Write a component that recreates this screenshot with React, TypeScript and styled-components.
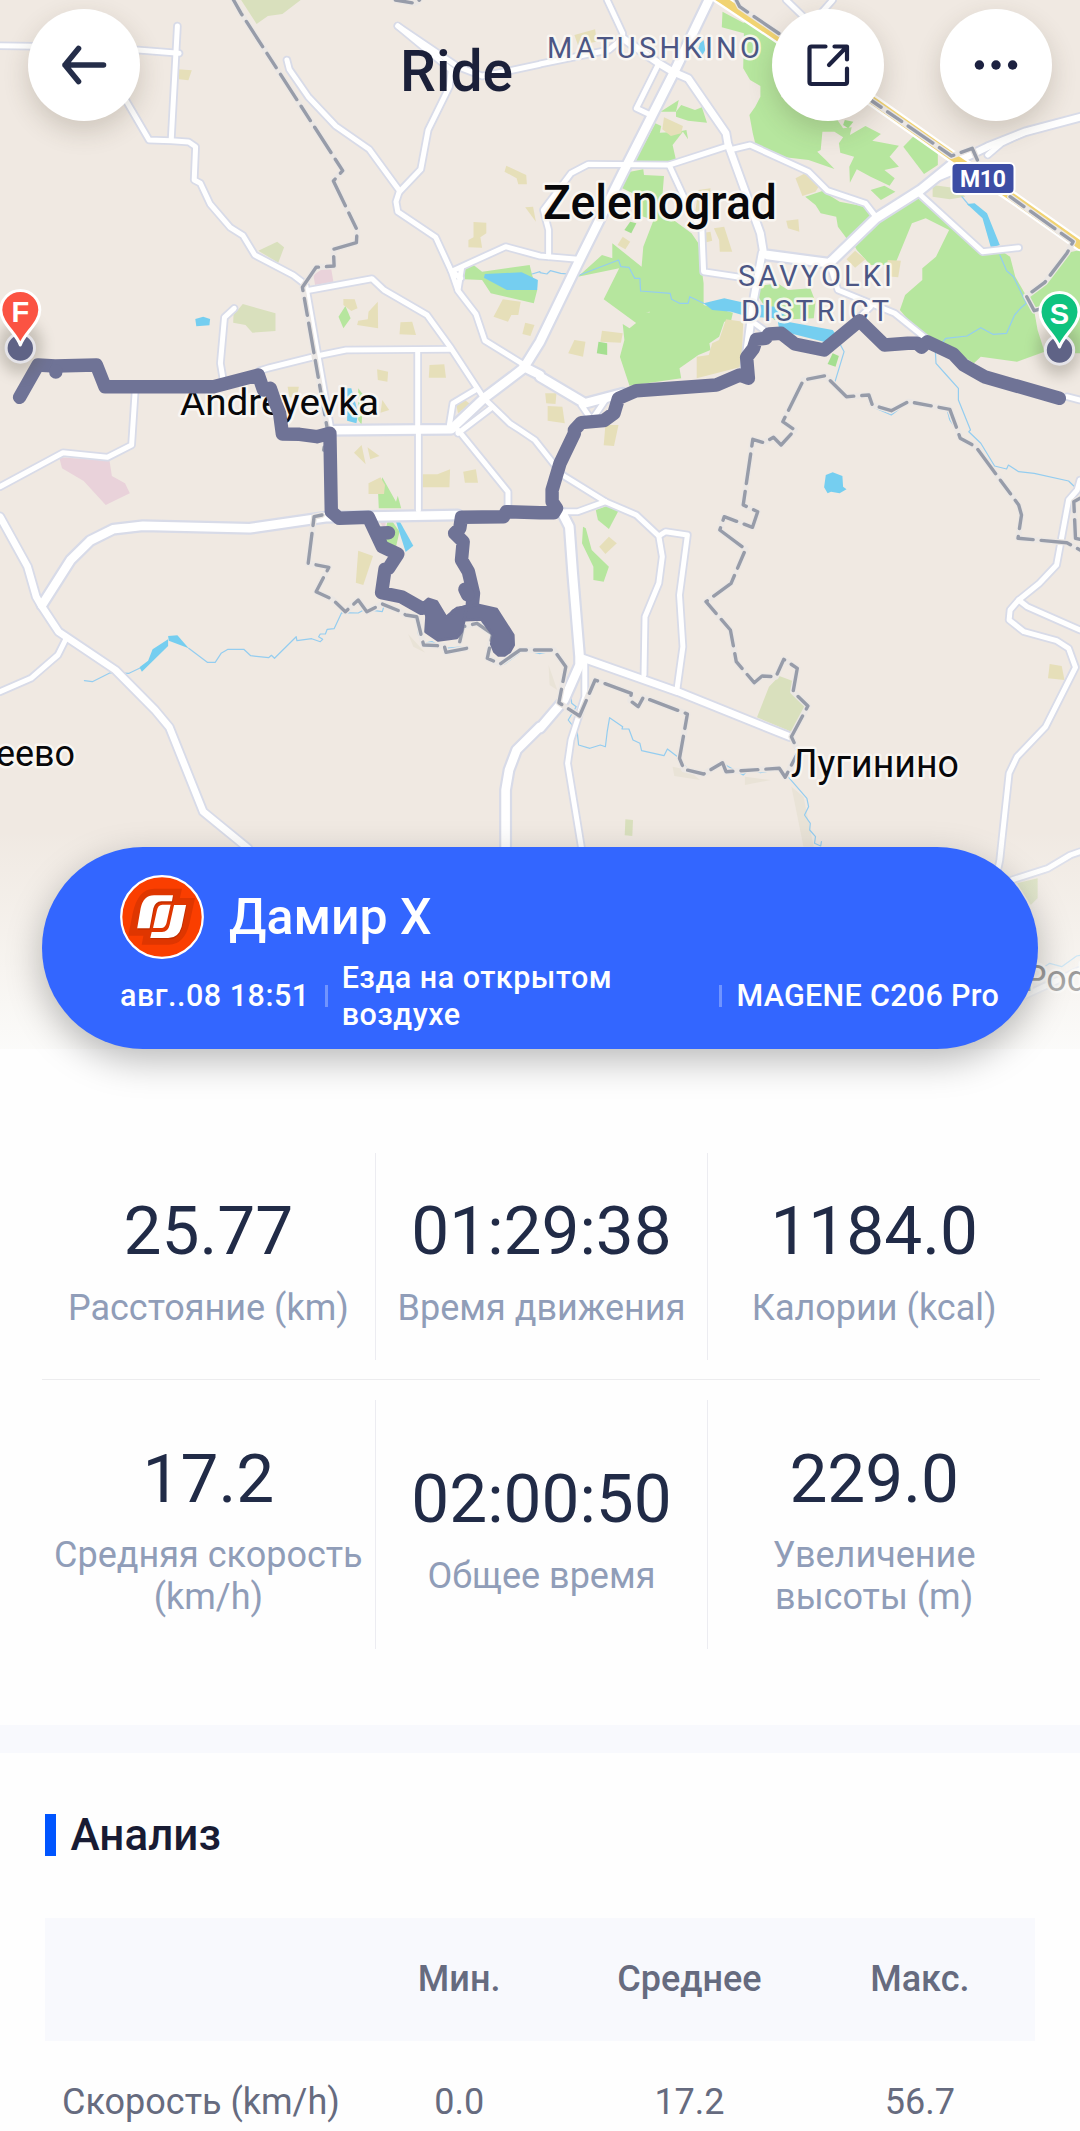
import React from "react";
import styled, { createGlobalStyle } from "styled-components";

const GlobalStyle = createGlobalStyle`
  * { box-sizing: border-box; }
  html, body { margin: 0; padding: 0; background: #fefefe; }
  body { font-family: Roboto, "Noto Sans", sans-serif; overflow: hidden; }
`;

/* ---------- map data: survey sheets, 1568 units across 540 px, 3 units per px down ---------- */

const sheets: Record<string, [number, number]> = {
  A: [0, 0],
  B: [540, 0],
  C: [0, 430],
  D: [540, 430],
  F: [540, 820],
};

/* "A 1 2 3 4 B 5 6" -> page-space polyline points */
const pts = (src: string): string => {
  let origin = sheets.A;
  const nums: number[] = [];
  const out: string[] = [];
  src.trim().split(/\s+/).forEach((tok) => {
    if (sheets[tok]) {
      origin = sheets[tok];
      return;
    }
    nums.push(Number(tok));
    if (nums.length === 2) {
      out.push(`${(origin[0] + nums[0] / 2.9037).toFixed(1)},${(origin[1] + nums[1] / 3).toFixed(1)}`);
      nums.length = 0;
    }
  });
  return out.join(" ");
};

const forest = [
  "B 530 35 590 68 610 62 700 110 700 290 800 360 862 358 880 385 905 382 900 405 945 378 990 402 965 422 1042 437 1015 470 1042 500 1000 510 1030 535 1015 557 960 530 920 508 900 548 898 500 912 470 872 458 868 430 880 412 855 395 820 395 815 450 805 455 830 480 855 507 780 480 700 470 625 430 618 400 608 345 625 320 640 290 640 258 610 240 590 205 592 100 528 82",
  "B 1085 408 1155 455 1155 495 1115 522 1055 440",
  "B 350 335 403 300 395 335",
  "B 395 335 410 315 450 330 470 322 485 368 430 362 395 350",
  "B 335 370 352 378 348 398 400 395 425 390 430 418 415 395 385 435 395 480 378 492 275 487",
  "B 262 515 300 508 302 525 360 528 355 590 375 650 440 700 460 730 475 850 475 915 560 938 555 962 535 965 520 1010 492 1030 495 1050 460 1065 405 1105 410 1135 260 1157 232 1070 245 1020 240 972 260 985 320 935 280 940 300 930 320 940 300 985 185 898 230 805 110 830 180 765 210 775 210 730 295 800 300 740 330 660 270 640 290 590 230 560",
  "B 770 590 820 573 870 605 945 620 970 645 920 700 890 715 865 680 860 650 815 640 800 615",
  "B 960 570 1000 557 1032 575 990 600",
  "B 1105 585 1125 610 1285 755 1335 750 1365 770 1380 830 1412 888 1435 932 1445 990 1465 1055 1385 1085 1280 1070 1260 1090 1170 1030 1110 1010 1045 930 1060 885 1110 840 1110 805 1150 770 1188 690 1120 655 1080 670 1040 770 1030 795 960 795 920 750 900 712 975 655",
  "B 1568 750 1568 1060 1480 1060 1490 910 1435 932 1412 888 1470 845 1525 760",
  "B 620 860 690 850 720 870 785 865 800 905 795 955 680 960 640 900",
  "A 1345 808 1375 795 1400 815 1538 795 1545 825 1560 870 1550 910 1425 880 1400 840 1348 838",
  "A 1003 918 1018 955 997 985 983 950",
  "A 1040 1165 1055 1185 1050 1275 1040 1260",
  "C 1110 142 1150 215 1155 197 1165 235 1100 235 1098 190",
  "C 1125 275 1140 275 1160 305 1150 350 1110 350",
  "D 162 240 195 228 228 242 200 297 168 270",
  "D 125 290 133 295 150 360 200 410 185 455 155 450 155 410 122 340",
];
const grove = [
  "B 850 1060 868 1068 858 1100 835 1092",
  "B 170 1025 195 1030 195 1065 165 1060",
  "B 245 690 262 665 280 670 265 700",
  "B 885 360 910 365 895 385 880 375",
];
const meadow = [
  "A 700 0 873 0 820 42 778 48 745 72",
  "A 750 752 805 725 825 742 808 788",
  "A 678 945 705 912 800 940 800 993 733 998 713 975 677 968",
  "D 630 862 665 770 695 738 740 755 735 785 770 830 730 905",
  "D 248 1168 270 1170 268 1218 246 1216",
  "B 1140 555 1210 565 1235 590 1190 598 1140 590",
  "F 1385 190 1445 175 1445 235 1425 255",
];
const scrub = [
  "D 730 1070 765 1100 795 1250 765 1250",
  "D 385 1010 430 1020 465 1050 390 1038",
  "D 595 1040 670 1050 595 1065",
  "D 25 705 50 780 28 765",
  "C 1185 612 1235 668 1200 650",
];
const sand = [
  "A 517 208 557 211 547 241 520 238",
  "A 1470 497 1528 525 1530 553 1505 553 1500 535 1465 515",
  "A 1525 622 1548 620 1556 665",
  "A 1375 666 1412 668 1412 700 1395 712 1400 743 1360 742 1360 720 1375 712",
  "A 1460 898 1512 905 1505 945 1485 945 1475 965 1433 950",
  "A 1525 968 1552 975 1540 1008 1517 1002",
  "A 997 897 1030 898 1038 925 1020 933 997 915",
  "A 1097 905 1098 985 1037 975 1040 962 1068 958 1070 935",
  "A 1163 967 1197 965 1208 1005 1160 1003",
  "A 1247 1095 1290 1093 1295 1133 1245 1133",
  "A 1095 1108 1127 1115 1125 1145 1097 1140",
  "A 835 1160 868 1160 860 1200 840 1190",
  "A 1110 1200 1130 1230 1105 1238",
  "A 1325 1215 1350 1200 1365 1212 1330 1240",
  "C 1028 68 1050 45 1062 103",
  "C 1067 52 1102 78 1075 88",
  "C 1070 160 1105 142 1118 165 1115 192 1070 192",
  "C 1227 133 1270 133 1307 118 1305 172 1227 172",
  "C 1345 125 1382 118 1388 158 1350 158",
  "C 1040 362 1083 378 1055 465 1033 458",
  "B 100 105 160 88 165 125 110 135",
  "B 360 352 415 378 410 400 380 408 355 388",
  "B 742 535 770 520 812 555 800 575 762 588",
  "B 715 662 750 658 753 695 720 685",
  "B 110 575 140 590 115 610",
  "B 460 570 495 565 490 640 450 640",
  "B 505 685 535 680 558 755 522 755 520 720",
  "B 470 700 495 695 500 722 478 728",
  "B 240 710 262 725 248 748 225 735",
  "B 915 752 945 778 915 803 890 778",
  "B 1010 780 1048 782 1040 832 1000 828",
  "B 540 958 590 965 585 1100 455 1135 455 1070 490 1065 500 1030 520 1020",
  "B 180 992 240 1000 235 1028 175 1025",
  "B 100 1020 132 1025 125 1070 82 1060",
  "B 15 1180 48 1180 45 1212 18 1210",
  "B 22 1218 65 1220 72 1270 22 1262",
  "D 190 -15 228 -15 215 48 185 46",
  "D 200 320 223 340 190 372 172 350",
  "D 1480 702 1515 708 1523 750 1475 745",
];
const built = [
  "A 910 825 935 808 962 808 968 845 915 855",
  "C 172 82 318 92 325 138 363 160 377 190 307 225 243 153 180 115",
  "C 1103 277 1120 277 1118 300",
];
const water = [
  "A 1408 822 1515 817 1562 840 1560 870 1472 870 1405 833",
  "A 567 957 590 950 610 957 608 976 570 979",
  "A 1008 1165 1020 1165 1040 1240 1035 1270 1008 1262",
  "C 1150 275 1162 277 1200 347 1178 366",
  "C 405 712 430 692 443 658 488 628 488 648 412 725",
  "C 488 618 515 616 548 655 490 632",
  "B 475 910 535 895 580 905 680 920 710 945 685 955 605 950 555 935 500 930",
  "B 690 960 850 990 860 1005 835 1028 735 1002 693 980",
  "B 1240 612 1262 610 1298 640 1335 735 1310 745 1285 655",
  "B 465 130 475 120 480 150 470 168 460 145",
  "D 830 135 850 127 878 138 880 170 890 178 870 190 845 185 835 190 825 172",
];
const streams = [
  "C 245 752 268 755 320 728 375 730 405 715",
  "C 548 655 602 697 625 697 642 670 662 658 708 658 728 677 780 683 788 676 797 685 860 620 862 632 905 626 930 635 937 628 925 620 930 612 945 612 950 598 970 596 992 548 1040 549 1060 538 1110 545 1115 528 1165 545 1210 560 1215 612 1230 640 1255 635 1290 655 1355 650",
  "C 1345 595 1400 580 1430 610 1420 680 1465 702 1520 660 1568 671 D 0 670 45 662 75 710 60 770 90 800 92 820 105 830 82 870 108 905 112 945 145 955 175 945 190 950 195 905 202 863 240 890 238 897 258 897 270 930 290 940 295 962 360 977 370 957 405 985 430 1020 475 1032 530 1000 590 1035 610 1015 640 1028 690 1018 720 1040 775 1105 780 1130 768 1155 785 1180 783 1200 800 1220 797 1240 815 1248 817 1235",
  "B 0 818 20 822 30 812 60 820 115 825 228 780 235 800 258 802 275 835 290 835 292 873 378 880 382 898 405 910 430 910 435 890 475 910",
  "B 1225 590 1245 615",
  "B 1335 765 1355 812 1375 830 1412 910 1395 925 1378 945 1355 1000 1315 1003 1280 983 1240 1008 1178 1015 1148 1055 1150 1090 1180 1125 1215 1165 1215 1200 1250 1290 D 1245 5 1280 40 1320 108 1355 117 1360 105 1390 125 1435 130 1535 153 1550 168",
  "B 870 1030 883 1055 855 1150 890 1192 950 1185 965 1220 1020 1245 1070 1205 1180 1220 1190 1260 1210 1290",
  "F 1465 440 1480 430 1515 440 1558 408 1568 406",
  "A 1545 822 1568 815",
];
const lanes = [
  "A 0 137 200 140 400 150 520 160",
  "A 515 78 497 420",
  "A 300 190 365 300 433 420 497 422 548 426 568 440 564 540 582 550 610 612 668 682 705 706 740 765 852 826 885 852",
  "A 833 180 840 208 895 290 975 378 1072 448 1160 572 1150 605 1155 635 1265 712 1310 812 1330 872 1382 942 1408 1022 1515 1090",
  "A 1155 78 1330 200 1400 228 1480 212 1568 193 B 0 192 200 150 240 115",
  "A 1155 78 1310 210",
  "A 1310 210 1305 260 1243 390 1222 508 1160 575",
  "A 1315 812 1468 740 1568 768 B 0 768 110 778",
  "A 1340 805 1330 870",
  "A 1310 812 1338 835",
  "A 890 872 1080 836 1115 870 1240 945 1310 1045 1405 1195 1480 1270 1510 1290 D -15 30 65 135 190 215 280 255 345 318 355 380 345 460 305 560 302 735",
  "A 888 858 960 1285",
  "A 680 925 652 952 640 1090 648 1140",
  "A 755 1112 780 1104 920 1068 1005 1050 1310 1048",
  "A 1213 1055 1213 1290 C 1215 0 1215 240",
  "A 392 1180 385 1290 C 382 45 312 82 183 68 0 170",
  "A 1380 1170 1315 1210 1305 1275",
  "A 1425 1225 1330 1300 C 1330 0 1475 185 1475 235",
  "B 120 1215 150 1260",
  "B 190 1200 150 1260",
  "D 345 318 365 305 428 315 405 495 415 650 398 775",
  "D 75 245 110 245 190 215",
  "D 130 700 130 800 90 930 80 1000 120 1250",
  "D 1568 150 1560 180 1535 210 1500 405 1450 460 1390 510 1365 540 1362 570 1405 605 1500 632 1535 655 1555 712 1468 890 1385 980 1362 1030 1335 1290 F 1328 155",
  "D 1390 510 1415 530 1568 600",
  "F 1370 180 1475 145 1540 105 1568 95",
  "F 1400 530 1568 450",
  "C 190 630 168 675 90 745 0 785",
  "B 195 0 240 100 240 115",
  "B 345 190 280 325 315 342",
  "B 25 770 25 690 10 630 90 520 140 493 375 495 540 440",
  "B 375 495 440 640 470 690 475 815 600 835",
  "B 550 450 610 435 780 515 835 572 945 610 975 650",
  "B 840 790 865 870 1030 940 1120 1015",
  "B 1105 585 1285 755 1390 743",
  "B 960 920 930 950",
  "B 715 0 775 60",
  "B 850 0 820 35",
  "B 1530 1190 1568 1200",
  "B 610 960 650 990",
  "B 1105 570 1130 545 1200 515",
  "B 1300 465 1340 430 1410 395",
];
const roads = [
  "B 240 115 345 190 385 215 430 235 540 400 545 430 640 700 650 765",
  "B 645 760 620 900 595 1100",
  "C 0 260 80 410 105 500 122 530 170 605 335 720 450 840 492 892 590 1145 720 1255",
  "D 125 685 400 785 725 920",
  "B 1200 490 1300 440 1410 395 1568 352",
];
const avenues = [
  "C 122 525 205 390 262 332 328 298 415 287 725 295 945 262 1330 255",
  "B 660 765 840 790 975 655 1105 570 1200 490",
  "B 490 0 390 215 240 520 110 790 0 1025 A 1520 1105 1405 1195 1310 1288 960 1291",
  "A 1520 1100 1568 1125 B 0 1130 130 1210 240 1180",
  "D 65 250 85 290 95 430 115 680 115 705 70 810 0 895 C 1568 890 1500 960 1478 1020 1468 1080 1468 1290",
];
const boundary = [
  "A 678 0 700 40 995 512 968 543 1037 690 1035 728 968 748 970 798 918 802 878 862 950 1285 C 940 60",
  "A 1148 0 1205 10 1218 0",
  "C 935 255 912 260 895 400 955 412 918 485 965 508 1003 545 1040 510 1065 545 1110 522 1165 545 1178 555 1210 560 1230 645 1290 648 1295 667 1355 655",
  "C 1335 635 1345 590 1385 580 1430 612 1415 685 1452 702 1510 660 1568 660 D 0 660 40 660 75 710 55 818 115 858 160 750 265 790 262 812 285 830 300 802 428 852 405 985 418 1018 475 1032 530 998 540 1025 695 1015 712 1042 750 965 730 920 778 828 735 785 747 715 708 688 685 740 645 738 622 758 570 695 553 600 482 515 555 460 597 358 522 300 535 260 617 292 632 245 590 225 618 28 650 38 678 22 700 45 740 0 B 705 1265 765 1140 828 1127 890 1190 955 1185 965 1215 1020 1232 1070 1205 1190 1228 1212 1290 D 1220 25 1265 50 1390 225 1398 255 1388 325 1530 338 1568 360",
  "D 1568 205 1550 215 1555 325 1568 328",
  "B 570 0 580 20 700 105 960 300 1195 468 1255 445 1270 480",
  "B 1365 590 1548 725 1530 760 1465 848 1412 888 1435 932 1480 920",
];
const motorway = "B 515 -10 530 0 690 110 975 308 1200 472 1380 598 1568 735";
const route =
  "B 1508 1195 1290 1130 1230 1095 1200 1062 1125 1025 1108 1042 1095 1030 1068 1030 1000 1035 928 962 825 1050 740 1032 700 1000 665 1002 655 1015 628 1018 620 1045 600 1072 605 1135 580 1125 512 1155 280 1172 228 1195 215 1240 185 1262 120 1268 100 1290 D 100 10 58 100 35 180 35 215 48 235 40 248 0 248 C 1470 245 1462 260 1340 262 1335 295 1320 310 1345 335 1340 390 1360 425 1375 490 1370 540 1325 555 1300 600 1270 600 1245 530 1225 535 1165 500 1108 488 1118 418 1128 415 1155 372 1110 350 1070 262 985 265 962 245 958 10 920 20 870 13 820 12 A 812 1240 800 1210 785 1165 765 1170 750 1125 620 1160 305 1160 280 1095 160 1098 110 1095 57 1192";
const routeSpurs = [
  "A 162 1112 162 1116",
  "C 1098 310 1128 308",
  "C 1350 478 1358 495",
  "C 1350 550 1400 548 1430 570",
];
const routeKnots = [
  "C 1229 520 1243 507 1268 515 1295 562 1326 535 1355 530 1347 575 1340 605 1326 623 1272 631 1236 605 1239 560",
  "C 1350 532 1384 524 1442 538 1490 615 1491 645 1480 665 1465 676 1448 676 1436 665 1427 642 1432 615 1398 568 1352 570",
];

const Fill = ({ items, color }: { items: string[]; color: string }) => (
  <g fill={color}>
    {items.map((s) => (
      <polygon key={s} points={pts(s)} />
    ))}
  </g>
);

const Lines = ({ items, color, width, dash }: { items: string[]; color: string; width: number; dash?: string }) => (
  <g fill="none" stroke={color} strokeWidth={width} strokeLinejoin="round" strokeLinecap="round" strokeDasharray={dash}>
    {items.map((s) => (
      <polyline key={s} points={pts(s)} />
    ))}
  </g>
);

const MapCanvas = styled.svg`
  position: absolute;
  inset: 0;
  display: block;
  font-family: Roboto, "Noto Sans", sans-serif;
`;

const PlaceName = styled.text<{ $size: number; $weight?: number; $tone?: string }>`
  font-size: ${(p) => p.$size}px;
  font-weight: ${(p) => p.$weight ?? 400};
  fill: ${(p) => p.$tone ?? "#08080a"};
  stroke: rgba(250, 248, 244, 0.92);
  stroke-width: 5px;
  stroke-linejoin: round;
  paint-order: stroke;
`;

const PinLetter = styled.text`
  font-family: "Liberation Sans", Arial, sans-serif;
  font-size: 29px;
  font-weight: 700;
  fill: #fff;
  text-anchor: middle;
`;

const ShieldText = styled.text`
  font-size: 23px;
  font-weight: 700;
  fill: #fff;
`;

const Pin = ({ x, y, color, letter }: { x: number; y: number; color: string; letter: string }) => (
  <g transform={`translate(${x} ${y})`}>
    <ellipse cx="0" cy="36" rx="22" ry="27" fill="#5a5648" opacity="0.28" filter="url(#soft)" />
    <circle cx="0" cy="37" r="14.2" fill="#5f6386" stroke="#e4e3e8" strokeWidth="3" />
    <path
      d="M0 34C-4 22-19.500 12-19.500 -1A19.500 19.500 0 0 1 19.500 -1C19.500 12 4 22 0 34Z"
      fill={color}
      stroke="#fff"
      strokeWidth="3"
      strokeLinejoin="round"
    />
    <PinLetter x="0" y="11">{letter}</PinLetter>
  </g>
);

const RideMap = () => (
  <MapCanvas width="1080" height="1049" viewBox="0 0 1080 1049">
    <defs>
      <filter id="soft" x="-60%" y="-60%" width="220%" height="220%">
        <feGaussianBlur stdDeviation="7" />
      </filter>
      <linearGradient id="fade" x1="0" y1="0" x2="0" y2="1">
        <stop offset="0" stopColor="#fcfcfa" stopOpacity="0" />
        <stop offset="0.55" stopColor="#fcfcfa" stopOpacity="0.5" />
        <stop offset="1" stopColor="#fcfcfb" stopOpacity="0.94" />
      </linearGradient>
    </defs>
    <rect width="1080" height="1049" fill="#f0e9e2" />
    <Fill items={scrub} color="#e9e3d7" />
    <Fill items={meadow} color="#d9e0bd" />
    <Fill items={forest} color="#b6e69e" />
    <Fill items={grove} color="#a5df90" />
    <Fill items={sand} color="#e6dfb9" />
    <Fill items={built} color="#e9d2da" />
    <Lines items={streams} color="#94cdf0" width={1.2} />
    <Fill items={water} color="#75cef0" />
    <Lines items={lanes} color="#d8dbe8" width={8.6} />
    <Lines items={roads} color="#d8dbe8" width={10.5} />
    <Lines items={avenues} color="#d8dbe8" width={13} />
    <Lines items={lanes} color="#ffffff" width={5} />
    <Lines items={roads} color="#ffffff" width={6.8} />
    <Lines items={avenues} color="#ffffff" width={8.6} />
    <Lines items={[motorway]} color="#ffffff" width={12.5} />
    <Lines items={[motorway]} color="#f1d372" width={8} />
    <Lines items={boundary} color="#ebe7e4" width={6} />
    <Lines items={boundary} color="#979ca9" width={3.4} dash="17 8 30 8" />

    <PlaceName $size={29} $tone="#4c5684" x="547" y="58" textLength="213">MATUSHKINO</PlaceName>
    <PlaceName $size={29} $tone="#4c5684" x="738" y="286" textLength="154">SAVYOLKI</PlaceName>
    <PlaceName $size={29} $tone="#4c5684" x="741" y="321" textLength="148">DISTRICT</PlaceName>
    <PlaceName $size={48} $weight={500} x="543" y="219" textLength="234" lengthAdjust="spacingAndGlyphs">Zelenograd</PlaceName>
    <PlaceName $size={37} x="180" y="414.500" textLength="199" lengthAdjust="spacingAndGlyphs">Andreyevka</PlaceName>
    <PlaceName $size={39} x="791" y="777" textLength="168" lengthAdjust="spacingAndGlyphs">Лугинино</PlaceName>
    <PlaceName $size={37} x="-4" y="766" textLength="79" lengthAdjust="spacingAndGlyphs">еево</PlaceName>
    <PlaceName $size={37} x="1024" y="990.500" textLength="63" lengthAdjust="spacingAndGlyphs">Pod</PlaceName>

    <rect x="951.500" y="163" width="63" height="31" rx="5" fill="#3d4da4" stroke="#fff" strokeWidth="2" />
    <ShieldText x="960" y="186.500" textLength="46">M10</ShieldText>

    <Lines items={[route]} color="#6f7396" width={13.4} />
    <Lines items={routeSpurs} color="#6f7396" width={13.4} />
    <Fill items={routeKnots} color="#6f7396" />
    <Lines items={routeKnots} color="#6f7396" width={3} />

    <Pin x={20.3} y={311} color="#fb5343" letter="F" />
    <Pin x={1059.500} y={313} color="#0fc37f" letter="S" />
    <rect y="830" width="1080" height="219" fill="url(#fade)" />
  </MapCanvas>
);

/* ---------- page ---------- */

const Page = styled.main`
  width: 1080px;
  height: 2131px;
  overflow: hidden;
  display: flex;
  flex-direction: column;
  background: #fefefe;
`;

const Hero = styled.section`
  position: relative;
  flex: none;
  height: 1049px;
  display: flex;
  flex-direction: column;
  justify-content: space-between;
  align-items: center;
`;

const TopBar = styled.header`
  z-index: 1;
  width: 100%;
  padding: 9px 28px 0;
  display: grid;
  grid-template-columns: 372px auto 1fr;
  align-items: center;
`;

const Actions = styled.div`
  display: flex;
  justify-content: flex-end;
  gap: 56px;
`;

const RoundButton = styled.button`
  width: 112px;
  height: 112px;
  padding: 0;
  border: 0;
  border-radius: 50%;
  background: #fff;
  display: flex;
  align-items: center;
  justify-content: center;
  box-shadow: 0 10px 26px rgba(70, 60, 40, 0.2);
`;

const Title = styled.h1`
  margin: 0;
  padding-top: 13px;
  font-size: 57px;
  font-weight: 500;
  line-height: 66px;
  color: #1b2039;
`;

const RiderCard = styled.section`
  z-index: 1;
  width: 996px;
  height: 202px;
  padding: 28px 39px 0 78px;
  border-radius: 101px;
  background: #3366ff;
  color: #fff;
  box-shadow: 0 12px 36px rgba(0, 0, 0, 0.27);
`;

const Rider = styled.div`
  display: flex;
  align-items: center;
  gap: 25px;
`;

const RiderName = styled.h2`
  margin: 0;
  font-size: 50px;
  font-weight: 500;
  line-height: 84px;
`;

const Facts = styled.div`
  display: flex;
  align-items: center;
  height: 73px;
  font-size: 30.500px;
  font-weight: 500;
  line-height: 37px;
`;

const Fact = styled.span<{ $grow?: boolean; $tracking?: number }>`
  flex: ${(p) => (p.$grow ? "1" : "none")};
  padding-right: ${(p) => (p.$grow ? "60px" : "0")};
  white-space: ${(p) => (p.$grow ? "normal" : "nowrap")};
  letter-spacing: ${(p) => p.$tracking ?? 0.5}px;
`;

const FactRule = styled.i`
  flex: none;
  width: 3px;
  height: 22px;
  margin: 0 14px 0 15px;
  background: rgba(255, 255, 255, 0.3);
`;

const Stats = styled.section`
  flex: none;
  height: 676px;
  padding: 104px 40px 0 42px;
`;

const StatRow = styled.div<{ $height: number; $last?: boolean }>`
  display: grid;
  grid-template-columns: repeat(3, 1fr);
  height: ${(p) => p.$height}px;
  padding-bottom: ${(p) => (p.$last ? 0 : 19)}px;
  margin-bottom: ${(p) => (p.$last ? 0 : 20)}px;
  border-bottom: ${(p) => (p.$last ? 0 : 1)}px solid #ececee;
`;

const Stat = styled.div`
  display: flex;
  flex-direction: column;
  align-items: center;
  justify-content: center;
  padding-top: 2px;
  text-align: center;
  & + & { border-left: 1px solid #ececf1; }
`;

const StatValue = styled.strong`
  font-size: 67.500px;
  font-weight: 400;
  line-height: 92px;
  color: #212b47;
`;

const StatLabel = styled.span`
  padding: 0 8px;
  margin-top: 10.500px;
  font-size: 36px;
  line-height: 41.700px;
  color: #909db8;
  white-space: pre-line;
`;

const Analysis = styled.section`
  border-top: 28px solid #f8f9fd;
  padding: 61px 45px 0;
`;

const SectionTitle = styled.h3`
  margin: 0;
  height: 42px;
  display: flex;
  align-items: center;
  gap: 14.500px;
  font-size: 44px;
  font-weight: 500;
  line-height: 42px;
  color: #181b33;
  &::before {
    content: "";
    width: 11px;
    height: 42px;
    background: #0055ff;
  }
`;

const Table = styled.div`
  margin-top: 62px;
`;

const TableRow = styled.div<{ $head?: boolean }>`
  display: grid;
  grid-template-columns: 299px repeat(3, 1fr);
  align-items: center;
  height: 122.500px;
  background: ${(p) => (p.$head ? "#f8f9fd" : "transparent")};
  font-size: 36px;
  font-weight: ${(p) => (p.$head ? 500 : 400)};
  color: #666b7f;
`;

const Cell = styled.span<{ $first?: boolean }>`
  padding-left: ${(p) => (p.$first ? 17 : 0)}px;
  text-align: ${(p) => (p.$first ? "left" : "center")};
`;

const BackIcon = () => (
  <svg width="50" height="44" viewBox="0 0 50 44" fill="none" stroke="#252e49" strokeWidth="5.600" strokeLinecap="round" strokeLinejoin="round">
    <path d="M6 22H44.500M19.500 5.500L6 22L19.500 38.500" />
  </svg>
);

const ShareIcon = () => (
  <svg width="44" height="44" viewBox="0 0 44 44" fill="none" stroke="#1c2140" strokeWidth="4.200" strokeLinecap="round" strokeLinejoin="round">
    <path d="M19.500 3.500H5.500Q3.500 3.500 3.500 5.500V39Q3.500 41 5.500 41H39Q41 41 41 39V25.500" />
    <path d="M28.500 3.500H41V16.500M40 4.500L23 22" />
  </svg>
);

const MoreIcon = () => (
  <svg width="44" height="12" viewBox="0 0 44 12" fill="#1c2140">
    <circle cx="5.400" cy="6" r="4.700" />
    <circle cx="22" cy="6" r="4.700" />
    <circle cx="38.600" cy="6" r="4.700" />
  </svg>
);

const Avatar = () => (
  <svg width="84" height="84" viewBox="348 165 244 252" preserveAspectRatio="none">
    <ellipse cx="470" cy="291" rx="118.500" ry="122.500" fill="#fa3e00" stroke="#fff" strokeWidth="6.500" />
    <path fill="#df3600" d="M372 347L385 280Q400 206 447 206H528L522 234H566L550 310Q535 374 490 374H411L416 347Z" />
    <g fill="#a62800" opacity="0.5" transform="translate(2 4)">
      <path d="M398 325L408 265Q416 226 447 226H502L499 244H468Q450 245 445 265L434 325Z" />
      <path d="M505 255H540L527 320Q518 354 488 354H436L440 336H470Q488 335 492 315Z" />
    </g>
    <g fill="#fff">
      <path d="M398 325L408 265Q416 226 447 226H502L499 244H468Q450 245 445 265L434 325Z" />
      <path d="M444 324L455 272Q458 254 471 254H495L483 310Q479 324 468 324Z" />
      <path d="M505 255H540L527 320Q518 354 488 354H436L440 336H470Q488 335 492 315Z" />
    </g>
  </svg>
);

const stats = [
  [
    { value: "25.77", label: "Расстояние (km)" },
    { value: "01:29:38", label: "Время движения" },
    { value: "1184.0", label: "Калории (kcal)" },
  ],
  [
    { value: "17.2", label: "Средняя скорость\n(km/h)" },
    { value: "02:00:50", label: "Общее время" },
    { value: "229.0", label: "Увеличение\nвысоты (m)" },
  ],
];

export default function App() {
  return (
    <Page>
      <GlobalStyle />
      <Hero>
        <RideMap />
        <TopBar>
          <RoundButton aria-label="Назад"><BackIcon /></RoundButton>
          <Title>Ride</Title>
          <Actions>
            <RoundButton aria-label="Поделиться"><ShareIcon /></RoundButton>
            <RoundButton aria-label="Ещё"><MoreIcon /></RoundButton>
          </Actions>
        </TopBar>
        <RiderCard>
          <Rider>
            <Avatar />
            <RiderName>Дамир Х</RiderName>
          </Rider>
          <Facts>
            <Fact>авг..08 18:51</Fact>
            <FactRule />
            <Fact $grow>Езда на открытом воздухе</Fact>
            <FactRule />
            <Fact $tracking={0.3}>MAGENE C206 Pro</Fact>
          </Facts>
        </RiderCard>
      </Hero>
      <Stats>
        {stats.map((row, i) => (
          <StatRow key={i} $height={i === 0 ? 227 : 249} $last={i === 1}>
            {row.map((s) => (
              <Stat key={s.label}>
                <StatValue>{s.value}</StatValue>
                <StatLabel>{s.label}</StatLabel>
              </Stat>
            ))}
          </StatRow>
        ))}
      </Stats>
      <Analysis>
        <SectionTitle>Анализ</SectionTitle>
        <Table>
          <TableRow $head>
            <Cell $first />
            <Cell>Мин.</Cell>
            <Cell>Среднее</Cell>
            <Cell>Макс.</Cell>
          </TableRow>
          <TableRow>
            <Cell $first>Скорость (km/h)</Cell>
            <Cell>0.0</Cell>
            <Cell>17.2</Cell>
            <Cell>56.7</Cell>
          </TableRow>
        </Table>
      </Analysis>
    </Page>
  );
}
